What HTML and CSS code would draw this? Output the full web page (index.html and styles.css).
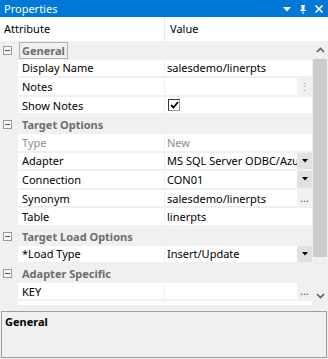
FILE: index.html
```html
<!DOCTYPE html>
<html>
<head>
<meta charset="utf-8">
<link rel="stylesheet" href="styles.css">
</head>
<body>
<div class="panel">
  <div class="titlebar">
    <span class="title">Properties</span>
    <span class="tb-icons">
      <svg width="10" height="10" viewBox="0 0 10 10"><path d="M1 3h8L5 7.5z" fill="#fff"/></svg>
      <svg width="10" height="10" viewBox="0 0 10 10"><path d="M3 1h4v1H6.5v4H8v1H5.5v3h-1V7H2V6h1.5V2H3z" fill="#fff"/></svg>
      <svg width="10" height="10" viewBox="0 0 10 10"><path d="M1.5 1.5l7 7M8.5 1.5l-7 7" stroke="#fff" stroke-width="1.6"/></svg>
    </span>
  </div>
  <div class="header">
    <div class="h-attr">Attribute</div>
    <div class="h-val">Value</div>
  </div>
  <div class="gridwrap">
    <div class="rows">
      <div class="row group"><span class="tog"></span><span class="glabel focus">General</span></div>
      <div class="row"><div class="attr">Display Name</div><div class="val">salesdemo/linerpts</div></div>
      <div class="row"><div class="attr">Notes</div><div class="val"><span class="vtext"></span><span class="btn vdots">⋮</span></div></div>
      <div class="row"><div class="attr">Show Notes</div><div class="val"><span class="chk"><svg width="9" height="8" viewBox="0 0 9 8"><path d="M1 4l2.5 2.5L8 1" stroke="#000" stroke-width="1.8" fill="none"/></svg></span></div></div>
      <div class="row group"><span class="tog"></span><span class="glabel">Target Options</span></div>
      <div class="row dis"><div class="attr">Type</div><div class="val">New</div></div>
      <div class="row"><div class="attr">Adapter</div><div class="val"><span class="vtext">MS SQL Server ODBC/Azure</span><span class="btn dd"><svg width="6" height="4" viewBox="0 0 6 4"><path d="M0 0h6L3 3.5z" fill="#000"/></svg></span></div></div>
      <div class="row"><div class="attr">Connection</div><div class="val"><span class="vtext">CON01</span><span class="btn dd"><svg width="6" height="4" viewBox="0 0 6 4"><path d="M0 0h6L3 3.5z" fill="#000"/></svg></span></div></div>
      <div class="row"><div class="attr">Synonym</div><div class="val"><span class="vtext">salesdemo/linerpts</span><span class="btn ell">...</span></div></div>
      <div class="row"><div class="attr">Table</div><div class="val">linerpts</div></div>
      <div class="row group"><span class="tog"></span><span class="glabel">Target Load Options</span></div>
      <div class="row"><div class="attr">*Load Type</div><div class="val"><span class="vtext">Insert/Update</span><span class="btn dd"><svg width="6" height="4" viewBox="0 0 6 4"><path d="M0 0h6L3 3.5z" fill="#000"/></svg></span></div></div>
      <div class="row group"><span class="tog"></span><span class="glabel">Adapter Specific</span></div>
      <div class="row"><div class="attr">KEY</div><div class="val"><span class="vtext"></span><span class="btn ell">...</span></div></div>
      <div class="row"><div class="attr"></div><div class="val"></div></div>
    </div>
    <div class="scrollbar">
      <div class="sb-btn"><svg width="9" height="6" viewBox="0 0 9 6"><path d="M1 5l3.5-3.5L8 5" stroke="#606060" stroke-width="1.6" fill="none"/></svg></div>
      <div class="sb-track"><div class="sb-thumb"></div></div>
      <div class="sb-btn"><svg width="9" height="6" viewBox="0 0 9 6"><path d="M1 1l3.5 3.5L8 1" stroke="#606060" stroke-width="1.6" fill="none"/></svg></div>
    </div>
  </div>
  <div class="desc">
    <div class="desc-title">General</div>
  </div>
</div>
</body>
</html>
```
FILE: styles.css
```css
* { box-sizing: border-box; }
html, body { margin: 0; padding: 0; }
body {
  width: 328px;
  height: 359px;
  overflow: hidden;
  background: #f0f0f0;
  font-family: "Noto Sans", "Open Sans", sans-serif;
  font-size: 11px;
  color: #000;
}
.panel { display: flex; flex-direction: column; height: 359px; }
.titlebar {
  flex: 0 0 17px;
  height: 17px;
  background: #0078d7;
  color: #fff;
  display: flex;
  align-items: center;
  justify-content: space-between;
  padding: 0 4px 0 4px;
}
.title { font-size: 11px; line-height: 17px; }
.tb-icons { display: flex; gap: 6px; align-items: center; }
.tb-icons svg { display: block; }
.header {
  flex: 0 0 24px;
  height: 24px;
  background: #fff;
  display: flex;
  align-items: center;
}
.h-attr { width: 165px; padding-left: 4px; border-right: 1px solid #e8e8e8; height: 24px; line-height: 24px; }
.h-val { padding-left: 5px; line-height: 24px; }
.gridwrap { display: flex; flex: 0 0 264px; height: 264px; }
.rows { width: 312px; overflow: hidden; display: flex; flex-direction: column; }
.row {
  flex: 0 0 18.6px;
  height: 18.6px;
  display: flex;
  padding-left: 18px;
  padding-bottom: 2px;
}
.attr {
  width: 146px;
  background: #fff;
  padding-left: 4px;
  display: flex;
  align-items: center;
  white-space: nowrap;
}
.val {
  width: 147px;
  margin-left: 1px;
  background: #fff;
  padding-left: 2px;
  display: flex;
  align-items: center;
  white-space: nowrap;
  overflow: hidden;
}
.vtext { flex: 1; min-width: 0; overflow: hidden; white-space: nowrap; text-overflow: clip; }
.dis .attr, .dis .val { color: #8d8d8d; }
.btn {
  flex: 0 0 15px;
  height: 100%;
  display: flex;
  align-items: center;
  justify-content: center;
}
.dd { background: #e1e1e1; }
.dd svg { display: block; }
.ell { background: #f0f0f0; font-size: 11px; color: #555; letter-spacing: 0; line-height: 1; padding-bottom: 1px; }
.vdots { background: #f0f0f0; color: #9a9a9a; font-size: 11px; }
.chk {
  width: 12px;
  height: 12px;
  border: 1px solid #333;
  border-right-color: #999;
  border-bottom-color: #999;
  background: #fff;
  display: flex;
  align-items: center;
  justify-content: center;
  margin-left: 1px;
}
.chk svg { display: block; }
.group {
  padding-left: 0;
  align-items: center;
  padding-bottom: 0;
}
.tog {
  width: 9px;
  height: 9px;
  border: 1px solid #9a9a9a;
  margin-left: 3px;
  margin-right: 7px;
  position: relative;
  background: #f7f7f7;
}
.tog::after {
  content: "";
  position: absolute;
  left: 1px;
  right: 1px;
  top: 3px;
  height: 1px;
  background: #555;
}
.glabel { font-weight: bold; color: #6d6d6d; padding: 0 2px; border: 1px solid transparent; line-height: 15px; }
.glabel.focus { border-color: #b0b0b0; }
.scrollbar {
  width: 16px;
  display: flex;
  flex-direction: column;
  background: #f0f0f0;
}
.sb-btn { height: 18px; display: flex; align-items: center; justify-content: center; }
.sb-btn svg { display: block; }
.sb-track { flex: 1; padding: 0 1px; }
.sb-thumb { height: 198px; background: #cdcdcd; }
.desc {
  margin: 6px 1px 1px 1px;
  flex: 1;
  border: 1px solid #a0a0a0;
  background: #f0f0f0;
  padding: 2px 3px;
}
.desc-title { font-weight: bold; }
```
